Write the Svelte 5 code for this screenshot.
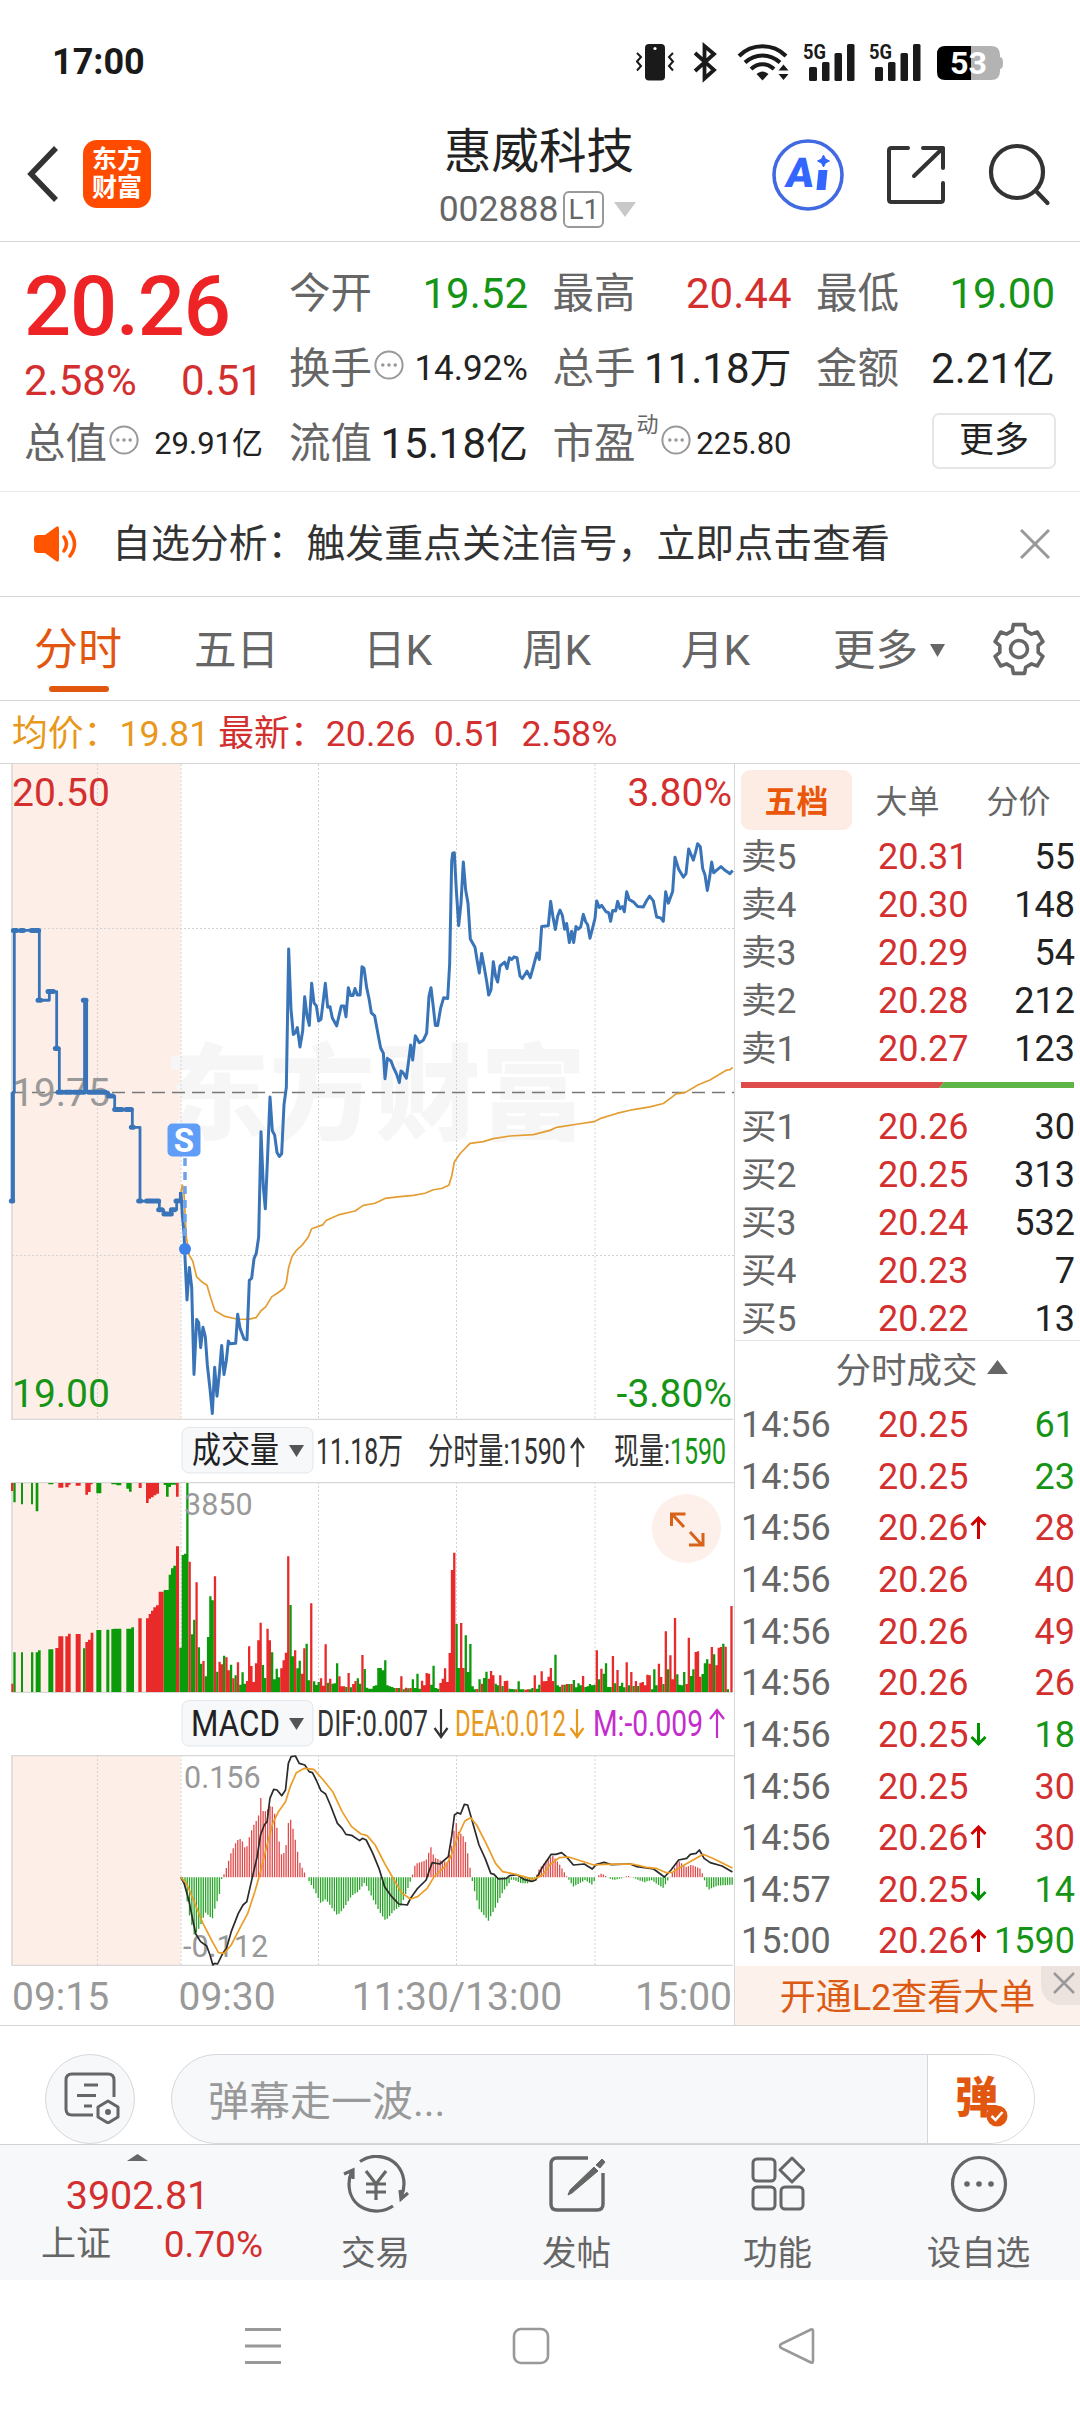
<script>
  const stats = [
    { label: '今开', value: '19.52', tone: 'down' },
    { label: '最高', value: '20.44', tone: 'up' },
    { label: '最低', value: '19.00', tone: 'down' },
    { label: '换手', value: '14.92%', info: true, size: 'mid' },
    { label: '总手', value: '11.18万' },
    { label: '金额', value: '2.21亿' },
    { label: '流值', value: '15.18亿' },
    { label: '市盈', sup: '动', value: '225.80', info: true, size: 'small' }
  ];

  const tabs = ['分时', '五日', '日K', '周K', '月K'];

  const sells = [
    ['卖5', '20.31', 55],
    ['卖4', '20.30', 148],
    ['卖3', '20.29', 54],
    ['卖2', '20.28', 212],
    ['卖1', '20.27', 123]
  ];
  const buys = [
    ['买1', '20.26', 30],
    ['买2', '20.25', 313],
    ['买3', '20.24', 532],
    ['买4', '20.23', 7],
    ['买5', '20.22', 13]
  ];

  const trades = [
    { time: '14:56', price: '20.25', vol: 61, side: 'down' },
    { time: '14:56', price: '20.25', vol: 23, side: 'down' },
    { time: '14:56', price: '20.26', vol: 28, side: 'up', move: 'up' },
    { time: '14:56', price: '20.26', vol: 40, side: 'up' },
    { time: '14:56', price: '20.26', vol: 49, side: 'up' },
    { time: '14:56', price: '20.26', vol: 26, side: 'up' },
    { time: '14:56', price: '20.25', vol: 18, side: 'down', move: 'down' },
    { time: '14:56', price: '20.25', vol: 30, side: 'up' },
    { time: '14:56', price: '20.26', vol: 30, side: 'up', move: 'up' },
    { time: '14:57', price: '20.25', vol: 14, side: 'down', move: 'down' },
    { time: '15:00', price: '20.26', vol: 1590, side: 'down', move: 'up' }
  ];

  const gridX = [97.5, 181, 318.5, 456.5, 595];

  // price lines: x in 1/3 px, y scaled by PRICE_Y
  const PRICE_Y = 0.43367;
  const preOpen =
    '34,1017 40,1017 40,766 43,766 43,393 118,393 118,554 148,554 148,534 170,534 170,665 178,665 178,766 254,766 254,554 260,554 260,766 325,766 330,775 344,775 344,806 397,806 397,847 420,847 420,1017 478,1017 478,1037 490,1037 495,1047 512,1047 518,1037 530,1037 530,1017 541,1017 541,996';
  const priceLine =
    '543,996 547,1050 552,1090 554,1130 561,1245 568,1170 575,1215 582,1417 590,1290 596,1297 602,1355 609,1308 616,1330 622,1395 630,1450 637,1507 644,1400 651,1467 658,1415 665,1350 672,1417 679,1385 685,1340 690,1346 707,1345 713,1278 720,1310 732,1335 741,1337 748,1200 755,1195 762,1150 769,1137 776,1100 783,857 790,985 796,1035 803,910 810,777 817,855 824,865 831,905 838,914 845,908 852,795 859,755 866,436 873,575 880,633 887,628 892,617 900,662 908,625 914,546 921,590 928,612 935,515 942,560 949,567 956,602 963,598 969,560 976,515 983,570 990,569 997,595 1010,613 1024,567 1032,567 1038,592 1045,525 1052,543 1059,543 1065,527 1072,542 1080,542 1086,477 1092,480 1100,525 1107,550 1114,583 1124,590 1134,632 1142,664 1150,676 1155,735 1162,688 1173,694 1180,708 1190,725 1198,744 1203,717 1210,722 1219,734 1225,700 1232,657 1238,692 1246,636 1258,652 1270,646 1280,630 1287,545 1293,525 1300,570 1306,612 1313,612 1322,572 1331,548 1343,550 1349,470 1355,235 1358,215 1363,214 1369,300 1376,382 1383,330 1390,235 1397,300 1404,330 1411,413 1425,432 1432,465 1438,491 1445,446 1452,475 1460,510 1466,542 1473,530 1480,465 1487,500 1493,512 1500,475 1514,466 1521,481 1528,456 1535,460 1542,454 1551,456 1560,498 1567,504 1581,487 1591,502 1598,482 1611,445 1618,460 1625,384 1645,382 1652,326 1659,362 1666,391 1673,360 1680,346 1687,358 1694,390 1700,377 1708,421 1715,395 1721,421 1728,384 1735,390 1742,385 1750,356 1757,373 1763,380 1770,411 1778,387 1785,365 1790,325 1798,340 1805,335 1818,350 1826,352 1832,372 1838,347 1847,348 1853,326 1860,343 1867,338 1873,350 1880,304 1888,322 1900,327 1913,338 1930,339 1940,324 1949,314 1960,325 1970,362 1982,364 1990,372 1997,304 2005,330 2018,303 2025,224 2036,252 2050,270 2058,262 2066,205 2073,218 2080,231 2087,212 2093,193 2101,200 2108,250 2115,265 2122,301 2129,270 2135,235 2141,260 2152,253 2163,246 2176,255 2190,262 2198,255';
  const avgLine =
    '543,996 547,980 552,1000 559,1100 568,1142 578,1155 590,1192 605,1203 621,1211 632,1240 645,1270 675,1283 710,1289 745,1290 768,1286 783,1270 797,1261 815,1238 835,1228 852,1218 859,1205 866,1170 876,1145 890,1130 905,1120 925,1100 935,1081 968,1072 978,1062 1015,1049 1065,1040 1090,1027 1125,1022 1155,1011 1200,1007 1240,1004 1275,999 1300,991 1325,988 1347,980 1355,960 1363,927 1380,908 1410,884 1450,880 1480,873 1530,867 1600,864 1650,854 1670,847 1730,840 1782,834 1800,827 1850,815 1900,806 1950,800 1990,792 2015,778 2028,770 2055,767 2095,749 2130,738 2180,715 2190,714 2198,709';

  // auction volume: [colour, x, width, height] in 1/3 px
  const auctionBars = [
    ['r', 34, 6, 25], ['g', 40, 7, 119], ['g', 63, 6, 119], ['g', 93, 7, 119], ['g', 107, 7, 119], ['g', 114, 8, 125],
    ['g', 145, 15, 128], ['r', 166, 9, 132], ['r', 175, 15, 167], ['r', 196, 8, 167], ['r', 204, 8, 175], ['r', 227, 15, 174],
    ['g', 249, 7, 131], ['r', 256, 8, 150], ['r', 264, 8, 157], ['r', 272, 8, 178], ['g', 289, 15, 186], ['g', 319, 9, 187],
    ['g', 334, 7, 189], ['g', 341, 23, 190], ['g', 379, 15, 190], ['g', 394, 8, 194], ['r', 415, 10, 221], ['r', 438, 8, 221],
    ['r', 446, 7, 234], ['r', 453, 7, 244], ['r', 460, 8, 254], ['r', 468, 8, 260], ['r', 476, 15, 301], ['g', 491, 15, 306],
    ['g', 506, 7, 352], ['g', 513, 7, 371], ['g', 520, 8, 379], ['r', 528, 9, 437]
  ];
  const unmatchedBars = [
    ['r', 33, 7, 24], ['g', 40, 7, 58], ['g', 63, 6, 64], ['g', 93, 6, 64], ['g', 107, 8, 85], ['g', 145, 15, 4],
    ['r', 175, 15, 14], ['r', 196, 10, 13], ['r', 206, 6, 5], ['r', 227, 15, 8], ['r', 256, 8, 35], ['r', 264, 8, 27],
    ['r', 272, 6, 4], ['g', 289, 15, 31], ['g', 334, 15, 4], ['g', 349, 15, 7], ['g', 379, 8, 17], ['g', 387, 8, 26],
    ['r', 416, 9, 15], ['r', 438, 8, 60], ['r', 446, 7, 47], ['r', 453, 8, 43], ['r', 461, 8, 37], ['r', 469, 8, 32],
    ['g', 491, 7, 6], ['g', 498, 8, 41], ['g', 506, 7, 12], ['g', 513, 15, 5], ['r', 528, 8, 41]
  ];

  // one bar per minute, split in runs that start at x
  const volumeRuns = [
    { x: 541, bars: 'g133 g411 g415 g627 r391 g173 g217 r329 g134 g85 r93 g47 g165 g287 g275 r347 g61 r91 r83 g109 r104 r65 g82 r41 g50 r89 g22 g59 g25 r33' },
    { x: 747, bars: 'r137 r78 r30 r86 r155 r208 g81 g42 r190 r155 g119 g38 g70 g44 r71 r95 r118 r407 g261 g107 r125 g71 g94 r55 r131 g145 g35 r266' },
    { x: 942, bars: 'g32 g21 g30 r41 r19 r143 g28 r40 g25 g26 g86 r47 r17 r17 g15 r57 g14 r24 r33 g41 g25 r111 g69 g13 g10' },
    { x: 1114, bars: 'g10 g18 g20 g72 g72 g65 g95 g20 g17 g15 g12 r12 g12 r47 g8 r13 g11 r12 g38 g12 g55 g10 r34 r20 r57 r55 g22 g79 g12 g10' },
    { x: 1321, bars: 'r27 r40 r71 r30 r117 r366 r418 g204 g72 r207 r72 g170 g60 g144 g17 g8 r9 g38 r25 g42 g61 r40 r63 r50 g25 g20 r50 g18 r33 r34' },
    { x: 1528, bars: 'g10 g9 g8 r8 g32 g8 g8 r7 r8 g8 g12 r50 g10 g22 r62 r32 r33 r46 r72 r33 g112 g20 g16 r22 g22 r24 g24 r24 g36 g14 g26 g20 r48 g15 g17 g24 g20 g22' },
    { x: 1790, bars: 'r125 g38 r70 g55 g86 g15 g15 r108 g26 r66 g18 g28 g14 r89 g20 r60 g18 r33 g18 r28 r30 r20 r52 r50 g8 g68 g20 r85 r45 g24' },
    { x: 1997, bars: 'r182 g68 r110 r38 r222 g53 g22 g20 g60 r24 r163 g48 g68 r120 r122 r46 g54 g86 g98 r85 r135 g113 r80 r133 r135 g145 r136 g8' },
    { x: 2194, bars: 'r258' }
  ];
  const volumeBars = volumeRuns.flatMap((run) =>
    run.bars.split(' ').map((bar, i) => [bar[0], run.x - 3 + i * 6.9, 6.9, Number(bar.slice(1))])
  );

  function barPath(bars, color, fromTop) {
    return bars
      .filter((b) => b[0] === color)
      .map(([, x, w, h]) => {
        const y = fromTop ? 1 : 210 - h / 3;
        return `M${(x / 3).toFixed(2)} ${y.toFixed(2)}h${(w / 3).toFixed(2)}v${(h / 3).toFixed(2)}h-${(w / 3).toFixed(2)}z`;
      })
      .join('');
  }

  // MACD, x in 1/2.119 px and y in 1/3 px
  const difLine =
    '383,532 390,550 400,600 410,670 415,702 425,725 438,738 445,765 451,795 455,790 461,792 472,760 480,745 490,695 505,640 515,615 523,605 535,530 545,470 552,405 560,375 566,365 572,295 580,268 587,270 597,287 605,270 611,190 617,170 626,168 634,190 646,195 655,215 662,218 670,240 680,272 690,282 700,315 715,370 725,385 733,403 745,406 762,422 768,415 776,420 790,460 803,505 815,560 830,590 845,612 863,615 870,595 885,565 903,540 910,510 916,488 932,492 950,470 957,410 963,345 970,338 976,342 984,313 991,315 1000,360 1015,435 1028,475 1040,520 1047,523 1056,537 1073,535 1080,527 1095,524 1110,538 1127,544 1135,540 1150,500 1168,463 1178,463 1190,458 1200,470 1215,495 1238,492 1255,507 1263,494 1280,487 1295,494 1335,492 1350,500 1385,507 1408,531 1422,510 1438,480 1455,475 1463,463 1475,460 1482,450 1492,475 1505,488 1530,498 1552,516';
  const deaLine =
    '383,532 395,550 410,600 430,670 450,725 463,758 475,760 490,735 510,680 525,640 540,575 553,510 565,440 578,370 590,335 605,305 615,260 628,218 645,205 665,208 685,240 705,275 725,335 745,380 765,402 778,407 795,435 815,490 835,540 852,580 870,597 885,590 905,565 920,530 945,497 955,470 970,410 985,363 997,353 1010,375 1030,430 1050,490 1065,515 1090,522 1110,530 1130,538 1150,525 1165,495 1185,473 1205,471 1225,480 1258,495 1280,493 1340,492 1370,502 1390,505 1412,518 1425,517 1450,495 1490,463 1510,475 1552,504';
  const macdShape = [
    [385, 0], [392, -25], [400, -105], [412, -175], [416, -165], [424, -148], [435, -105], [450, -125], [456, -90], [465, -50],
    [470, -3], [475, 10], [480, 30], [490, 75], [500, 105], [507, 118], [515, 105], [521, 80], [530, 130], [540, 165],
    [547, 175], [552, 243], [558, 195], [565, 200], [575, 220], [582, 190], [590, 120], [597, 65], [605, 80], [612, 175],
    [617, 172], [625, 118], [635, 45], [645, 15], [652, -5], [665, -35], [680, -78], [690, -65], [715, -115], [730, -90],
    [745, -55], [760, -42], [773, -15], [790, -65], [805, -105], [817, -130], [835, -100], [850, -85], [865, -30], [872, -3],
    [880, 40], [900, 50], [905, 55], [912, 95], [920, 60], [935, 50], [948, 45], [958, 100], [965, 172], [972, 135],
    [980, 128], [988, 100], [997, 20], [1002, -20], [1015, -95], [1035, -130], [1050, -90], [1065, -45], [1085, -5], [1105, -18],
    [1120, -18], [1135, -2], [1140, 20], [1160, 55], [1172, 65], [1185, 40], [1200, 5], [1215, -28], [1240, -8], [1255, -22],
    [1265, 3], [1275, 12], [1290, -2], [1300, -8], [1320, -2], [1330, 5], [1345, -3], [1365, -15], [1380, -8], [1405, -32],
    [1420, 2], [1437, 50], [1455, 30], [1465, 38], [1485, 25], [1500, -38], [1520, -25], [1553, -22]
  ];

  function macdHeight(x) {
    const i = macdShape.findIndex((p) => p[0] >= x);
    if (i <= 0) return 0;
    const [x0, h0] = macdShape[i - 1];
    const [x1, h1] = macdShape[i];
    return h0 + ((h1 - h0) * (x - x0)) / (x1 - x0);
  }

  const macdBars = Array.from({ length: 240 }, (_, i) => {
    const x = 387 + i * 4.872;
    return { x, h: macdHeight(x) };
  });
  const macdPath = (sign) =>
    macdBars
      .filter((b) => b.h * sign > 0)
      .map((b) => `M${b.x.toFixed(1)} 532v${(-b.h).toFixed(1)}`)
      .join('');

  const gear = Array.from({ length: 6 }, (_, i) => {
    const at = (deg, r) => {
      const a = ((i * 60 + deg - 90) * Math.PI) / 180;
      return `${(27 + r * Math.cos(a)).toFixed(1)} ${(27 + r * Math.sin(a)).toFixed(1)}`;
    };
    return `${at(-20, 19.5)}L${at(-13, 25)}L${at(13, 25)}L${at(20, 19.5)}`;
  }).join('L');
</script>

{#snippet more()}
  <svg class="info" width="30" height="30" viewBox="0 0 30 30">
    <circle cx="15" cy="15" r="13.6" fill="none" stroke="#999" stroke-width="2" />
    <circle cx="8.8" cy="15" r="1.8" fill="#999" />
    <circle cx="15" cy="15" r="1.8" fill="#999" />
    <circle cx="21.2" cy="15" r="1.8" fill="#999" />
  </svg>
{/snippet}

{#snippet signal()}
  <g>
    <rect x="5" y="24" width="8" height="14" rx="1.5" />
    <rect x="18" y="19" width="7.5" height="19" rx="1.5" />
    <rect x="30.5" y="10" width="7.5" height="28" rx="1.5" />
    <rect x="43" y="1" width="7.5" height="37" rx="1.5" />
    <text x="-1" y="16" font-size="21" font-weight="700" textLength="23" lengthAdjust="spacingAndGlyphs">5G</text>
  </g>
{/snippet}

{#snippet book(rows)}
  {#each rows as [label, price, vol]}
    <div class="level">
      <span class="level-label">{label}</span>
      <span class="level-price up">{price}</span>
      <span class="level-vol">{vol}</span>
    </div>
  {/each}
{/snippet}

<div class="page" lang="zh-CN">
  <div class="status">
    <span class="clock">17:00</span>
    <svg width="370" height="50" viewBox="0 -5 370 50" fill="#1a1a1a">
      <rect x="9" y="1" width="20" height="36.500" rx="4" />
      <circle cx="19" cy="5.500" r="1.600" fill="#fff" />
      <path d="M1 10l4 4-4 4.500 4 4.500-4 4.500M37 10l-4 4 4 4.500-4 4.500 4 4.500" fill="none" stroke="#1a1a1a" stroke-width="2" />
      <path d="M59 10l19 17-9.500 8.500V3l9.500 8-19 17" fill="none" stroke="#1a1a1a" stroke-width="3.800" />
      <g fill="none" stroke="#1a1a1a" stroke-width="4">
        <path d="M103 13c13-13 34-13 47 0" />
        <path d="M109 19.500c10-9.500 25-9.500 35 0" />
        <path d="M115 26c7-6.500 16-6.500 23 0" />
      </g>
      <path d="M120.500 31c4-3.500 8-3.500 12 0l-6 6.500z" />
      <path d="M142.500 27.500l5-6 5 6zM142.500 31l5 6 5-6z" />
      <g transform="translate(168)">{@render signal()}</g>
      <g transform="translate(234)">{@render signal()}</g>
      <path d="M309 3h26v34h-26q-8 0-8-8V11q0-8 8-8z" fill="#000" />
      <path d="M335 3h20q9 0 9 9v2q3 0 3 6t-3 6v2q0 9-9 9h-20z" fill="#b3b3b3" />
      <text x="314" y="31" fill="#fff" font-size="31" font-weight="700" textLength="37" lengthAdjust="spacingAndGlyphs">53</text>
    </svg>
  </div>

  <header class="head">
    <div class="head-left">
      <svg width="34" height="58" viewBox="0 0 34 58">
        <path d="M30 3L5 29l25 26" fill="none" stroke="#333" stroke-width="5.500" />
      </svg>
      <div class="logo"><span>东方</span><span>财富</span></div>
    </div>
    <div class="head-title">
      <h1>惠威科技</h1>
      <div class="code">
        <span>002888</span>
        <span class="l1">L1</span>
        <svg width="22" height="15" viewBox="0 0 22 15"><path d="M0 0h22L11 15z" fill="#c8c8c8" /></svg>
      </div>
    </div>
    <div class="head-right">
      <svg width="72" height="72" viewBox="0 0 72 72">
        <circle cx="36" cy="36" r="34" fill="none" stroke="#4169e1" stroke-width="3.600" />
        <text x="13" y="48.500" font-size="41" font-weight="900" fill="#3366ff" transform="translate(6) skewX(-8)" textLength="28" lengthAdjust="spacingAndGlyphs">A</text>
        <path d="M46.500 31H55.500l-2 20H44.500z" fill="#3366ff" />
        <path d="M51.500 16l2 4 4 2-4 2-2 4-2-4-4-2 4-2z" fill="#3366ff" stroke="#3366ff" />
      </svg>
      <svg width="60" height="60" viewBox="0 0 60 60" fill="none" stroke="#333" stroke-width="4" stroke-linecap="round" stroke-linejoin="round">
        <path d="M22 3H5.500Q3 3 3 5.500v49Q3 57 5.500 57h49q2.500 0 2.500-2.500V38M37 3h20v20M57 3L28 31" />
      </svg>
      <svg width="64" height="64" viewBox="0 0 64 64" fill="none" stroke="#333" stroke-width="4.200" stroke-linecap="round">
        <circle cx="29" cy="29" r="26" />
        <path d="M48 48l11.500 12" />
      </svg>
    </div>
  </header>

  <section class="quote">
    <div class="quote-main">
      <div class="price">20.26</div>
      <div class="change"><span>2.58%</span><span>0.51</span></div>
      <div class="stat">
        <span class="stat-label">总值</span>{@render more()}
        <span class="stat-value small">29.91亿</span>
      </div>
    </div>
    <div class="quote-grid">
      {#each stats as s}
        <div class="stat">
          <span class="stat-label">{s.label}</span>
          {#if s.sup}<span class="sup">{s.sup}</span>{/if}
          {#if s.info}{@render more()}{/if}
          <span class="stat-value {s.tone ?? ''} {s.size ?? ''}">{s.value}</span>
        </div>
      {/each}
      <div class="stat end"><button class="more-btn">更多</button></div>
    </div>
  </section>

  <section class="notice">
    <svg width="46" height="36" viewBox="0 0 46 36">
      <path d="M4 9h7L22 1q3-2 3 2v30q0 4-3 2L11 27H4q-4 0-4-4V13q0-4 4-4z" fill="#ff5500" />
      <path d="M30 11q5 7 0 14M36 6q9 12 0 24" fill="none" stroke="#ff5500" stroke-width="3.500" stroke-linecap="round" />
    </svg>
    <p>自选分析：触发重点关注信号，立即点击查看</p>
    <svg width="30" height="30" viewBox="0 0 30 30"><path d="M1 1l28 28M29 1L1 29" stroke="#999" stroke-width="3" /></svg>
  </section>

  <nav class="tabs">
    {#each tabs as tab, i}
      <span class="tab" class:active={i === 0}>{tab}</span>
    {/each}
    <span class="tab">更多<svg width="15" height="13" viewBox="0 0 15 13"><path d="M0 0h15L7.500 13z" fill="#666" /></svg></span>
    <svg class="gear" width="54" height="54" viewBox="0 0 54 54" fill="none" stroke="#666" stroke-width="3.600" stroke-linejoin="round">
      <path d="M{gear}z" />
      <circle cx="27" cy="27" r="8.500" />
    </svg>
  </nav>

  <div class="legend">
    <span class="avg">均价：19.81</span>
    <span>最新：20.26</span>
    <span>0.51</span>
    <span>2.58%</span>
  </div>

  <main class="board">
    <div class="charts">
      <svg width="734" height="656" viewBox="0 0 734 656">
        <rect x="12" y="0" width="168.500" height="655" fill="#fdeee7" />
        <text class="watermark" x="164" y="368" textLength="422" lengthAdjust="spacingAndGlyphs">东方财富</text>
        <g class="grid">
          {#each gridX as x}<path d="M{x} 0V655" />{/each}
          <path d="M12 164.500H734M12 491.500H734" />
        </g>
        <path class="frame" d="M12 0V655.500H733" />
        <path d="M12 328.500H734" stroke="#777" stroke-width="1.600" stroke-dasharray="13 7" />
        <text x="12" y="342" fill="#999">19.75</text>
        <g class="lines" transform="translate(0 -4) scale(0.33333 {PRICE_Y})">
          <polyline points={avgLine} stroke="#e39d33" stroke-width="1.700" />
          <polyline points={preOpen} stroke="#3a74b8" stroke-width="2.800" />
          <polyline points="38,1017 38,766" stroke="#3a74b8" stroke-width="4" />
          <polyline points="257,766 257,554" stroke="#3a74b8" stroke-width="4" />
          <polyline points={priceLine} stroke="#3a74b8" stroke-width="3" />
          <path
            d="M34 1017h4M40 393h10M62 393h8M94 393h22M114 554h8M144 534h16M166 665h8M174 766h14M196 766h18M222 766h30M250 554h8M266 766h50M326 775h12M344 806h22M378 806h16M394 847h6M416 1017h6M440 1017h36M476 1037h10M492 1047h22M514 1037h10M528 1017h8"
            stroke="#3a74b8"
            stroke-width="5"
            stroke-linecap="round"
          />
        </g>
        <path d="M185 394V478" stroke="#6ea3ea" stroke-width="3.500" stroke-dasharray="8 6" />
        <circle cx="185" cy="485" r="6" fill="#3c82ea" />
        <rect x="167.500" y="359.500" width="33" height="33" rx="5" fill="#5f9df7" />
        <text x="184" y="388" text-anchor="middle" font-size="33" font-weight="700" fill="#fff">S</text>
        <text x="12" y="42" fill="#d32f2f">20.50</text>
        <text x="732" y="42" text-anchor="end" fill="#d32f2f">3.80%</text>
        <text x="12" y="643" fill="#159415">19.00</text>
        <text x="732" y="643" text-anchor="end" fill="#159415">-3.80%</text>
      </svg>

      <svg class="indicator" width="734" height="62" viewBox="0 0 734 62">
        <rect x="182" y="7.500" width="131" height="45.500" rx="7" fill="#f6f8fa" stroke="#e3e6ea" />
        <text x="192" y="43" fill="#222" textLength="87" lengthAdjust="spacingAndGlyphs">成交量</text>
        <path d="M289 25h15l-7.500 12z" fill="#555" />
        <text x="316" y="44" textLength="87" lengthAdjust="spacingAndGlyphs">11.18万</text>
        <text x="428" y="44" textLength="138" lengthAdjust="spacingAndGlyphs">分时量:1590</text>
        <path class="arrow" d="M577.500 47V19M571 28l6.500-9 6.500 9" />
        <text x="614" y="44" lengthAdjust="spacingAndGlyphs" textLength="112">现量:<tspan fill="#159415">1590</tspan></text>
      </svg>

      <svg width="734" height="211" viewBox="0 0 734 211">
        <rect x="12" y="0" width="168.500" height="210" fill="#fdeee7" />
        <g class="grid">
          {#each gridX as x}<path d="M{x} 0V210" />{/each}
        </g>
        <path class="frame" d="M734 .5H12V210.500H733" />
        {#each [['g', '#0a9a0a'], ['r', '#e82a2a']] as [key, color]}
          <path d={barPath(auctionBars, key)} fill={color} />
          <path d={barPath(unmatchedBars, key, true)} fill={color} />
          <path d={barPath(volumeBars, key)} fill={color} />
        {/each}
        <text class="scale" x="184" y="33">3850</text>
        <circle cx="686.500" cy="46.500" r="34.500" fill="#fdf0ea" />
        <path d="M671.500 44V32h14M672 32l12 13M703 51v12h-14M702 63l-12-13" fill="none" stroke="#d9621b" stroke-width="3" />
      </svg>

      <svg class="indicator" width="734" height="62" viewBox="0 0 734 62">
        <rect x="182" y="7.500" width="131" height="45.500" rx="7" fill="#f6f8fa" stroke="#e3e6ea" />
        <text x="191" y="43" fill="#222" textLength="89" lengthAdjust="spacingAndGlyphs">MACD</text>
        <path d="M289 25h15l-7.500 12z" fill="#555" />
        <text x="317" y="43" textLength="111" lengthAdjust="spacingAndGlyphs">DIF:0.007</text>
        <path class="arrow" d="M441 16V44M434.500 35l6.500 9 6.500-9" />
        <text x="455" y="43" textLength="111" lengthAdjust="spacingAndGlyphs" fill="#e8981c">DEA:0.012</text>
        <path class="arrow dea" d="M577 16V44M570.500 35l6.500 9 6.500-9" />
        <text x="593" y="43" textLength="110" lengthAdjust="spacingAndGlyphs" fill="#c42dcb">M:-0.009</text>
        <path class="arrow macd" d="M717 45V17M710 26l7-9 7 9" />
      </svg>

      <svg width="734" height="211" viewBox="0 0 734 211">
        <rect x="12" y="0" width="168.500" height="210" fill="#fdeee7" />
        <g class="grid">
          {#each gridX as x}<path d="M{x} 0V210" />{/each}
        </g>
        <path class="frame" d="M734 .5H12V210.500H733" />
        <text class="scale" x="184" y="33">0.156</text>
        <text class="scale" x="183" y="202">-0.112</text>
        <g class="lines" transform="translate(0 -55) scale(0.47192 0.33333)">
          <path d={macdPath(1)} stroke="#e04a4a" stroke-width="1.300" />
          <path d={macdPath(-1)} stroke="#28a428" stroke-width="1.300" />
          <polyline points={difLine} stroke="#2b2b2b" stroke-width="1.700" />
          <polyline points={deaLine} stroke="#eb9d26" stroke-width="1.700" />
        </g>
      </svg>

      <svg width="734" height="59" viewBox="0 0 734 59" fill="#999">
        <text x="12" y="44">09:15</text>
        <text x="178.500" y="44">09:30</text>
        <text x="457" y="44" text-anchor="middle">11:30/13:00</text>
        <text x="732" y="44" text-anchor="end">15:00</text>
      </svg>
    </div>

    <aside class="side">
      <div class="side-tabs">
        <span class="side-tab on">五档</span>
        <span class="side-tab">大单</span>
        <span class="side-tab">分价</span>
      </div>
      {@render book(sells)}
      <svg class="ratio" width="333" height="6" viewBox="0 0 333 6">
        <path d="M0 0h203l-5 6H0z" fill="#dd4b4b" />
        <path d="M203 0h130v6H198z" fill="#5fb548" />
      </svg>
      {@render book(buys)}
      <div class="trades-title">
        分时成交
        <svg width="21" height="14" viewBox="0 0 21 14"><path d="M0 14h21L10.500 0z" fill="#666" /></svg>
      </div>
      {#each trades as t}
        <div class="trade">
          <span class="trade-time">{t.time}</span>
          <span class="trade-price up">{t.price}</span>
          <span class="trade-move">
            {#if t.move === 'up'}
              <svg width="17" height="24" viewBox="0 0 17 24"><path d="M8.500 23V2M1.500 9l7-7 7 7" fill="none" stroke="#d00000" stroke-width="3" /></svg>
            {:else if t.move === 'down'}
              <svg width="17" height="24" viewBox="0 0 17 24"><path d="M8.500 1v21M1.500 15l7 7 7-7" fill="none" stroke="#009300" stroke-width="3" /></svg>
            {/if}
          </span>
          <span class="trade-vol {t.side}">{t.vol}</span>
        </div>
      {/each}
      <div class="banner">
        开通L2查看大单
        <span class="banner-close">
          <svg width="22" height="22" viewBox="0 0 22 22"><path d="M1 1l20 20M21 1L1 21" stroke="#999" stroke-width="2.500" /></svg>
        </span>
      </div>
    </aside>
  </main>

  <section class="comment">
    <div class="round">
      <svg width="56" height="52" viewBox="0 0 56 52" fill="none" stroke="#666" stroke-width="3">
        <path d="M29 43H8q-6 0-6-6V8q0-6 6-6h36q6 0 6 6v17" />
        <path d="M20 13h14M13 23.500h19M20 34h8" />
        <path d="M44 29l10 6v10l-10 6-10-6V35z" stroke-linejoin="round" />
        <circle cx="44" cy="40" r="2" fill="#666" stroke-width="2" />
      </svg>
    </div>
    <div class="input">
      <span class="placeholder">弹幕走一波...</span>
      <span class="danmu">
        弹
        <svg class="check" width="22" height="22" viewBox="0 0 22 22">
          <circle cx="11" cy="11" r="10.500" fill="#e2570f" />
          <path d="M5.500 11l4 4 7-8" fill="none" stroke="#fff" stroke-width="2.500" />
        </svg>
      </span>
    </div>
  </section>

  <footer class="bottom">
    <div class="index">
      <svg width="21" height="7" viewBox="0 0 21 7"><path d="M0 7h21L10.500 0z" fill="#666" /></svg>
      <span class="index-value">3902.81</span>
      <div class="index-row"><span>上证</span><span class="up">0.70%</span></div>
    </div>
    <div class="item">
      <svg width="66" height="58" viewBox="0 0 66 58" fill="none" stroke="#666" stroke-width="3.200">
        <path d="M17 6.500C35-6 61 5 61 29c0 5-1 9-3 13M65 38l-7 6-1-9M50 51C32 63 6 53 6 29c0-5 1-9 3-13M1 19l9-4v9" />
        <path d="M23 16l10 13 10-13M33 29v16M23 29h20M23 37h20" />
      </svg>
      <span>交易</span>
    </div>
    <div class="item">
      <svg width="58" height="58" viewBox="0 0 58 58" fill="none" stroke="#666" stroke-width="3.400">
        <path d="M40 3H9Q3 3 3 9v40q0 6 6 6h40q6 0 6-6V18" />
        <path d="M54 4l3 3-5 6-4-3zM46 12l4 4-26 22-4 2 2-5z" fill="#666" stroke-width="1" />
      </svg>
      <span>发帖</span>
    </div>
    <div class="item">
      <svg width="54" height="58" viewBox="0 0 54 58" fill="none" stroke="#666" stroke-width="3" stroke-linejoin="round">
        <rect x="2" y="4" width="22" height="22" rx="4" />
        <rect x="2" y="32" width="22" height="22" rx="4" />
        <rect x="30" y="32" width="22" height="22" rx="4" />
        <path d="M41 3l12 12-12 12-12-12z" />
      </svg>
      <span>功能</span>
    </div>
    <div class="item">
      <svg width="58" height="58" viewBox="0 0 58 58">
        <circle cx="29" cy="29" r="26.500" fill="none" stroke="#666" stroke-width="3.200" />
        <circle cx="17" cy="29" r="2.800" fill="#666" />
        <circle cx="29" cy="29" r="2.800" fill="#666" />
        <circle cx="41" cy="29" r="2.800" fill="#666" />
      </svg>
      <span>设自选</span>
    </div>
  </footer>

  <div class="system">
    <svg width="36" height="38" viewBox="0 0 36 38"><path d="M0 2.500h36M0 19h36M0 35.500h36" stroke="#999" stroke-width="3" /></svg>
    <svg class="home" width="38" height="38" viewBox="0 0 38 38"><rect x="2" y="2" width="34" height="34" rx="7" fill="none" stroke="#999" stroke-width="2.600" /></svg>
    <svg width="38" height="38" viewBox="0 0 38 38"><path d="M33 2.500q2-1 2 2v29q0 3-2 2L3 21q-2-2 0-4z" fill="none" stroke="#999" stroke-width="2.600" /></svg>
  </div>
</div>

<style>
  :global(body) {
    margin: 0;
    background: #fff;
  }

  .page {
    width: 1080px;
    height: 2412px;
    overflow: hidden;
    background: #fff;
    color: #222;
    font-family: Roboto, 'Noto Sans CJK SC', sans-serif;
    line-height: 1.2;
  }

  .page * {
    box-sizing: border-box;
  }

  svg {
    display: block;
    flex-shrink: 0;
  }

  .up {
    color: #d32f2f;
  }

  .down {
    color: #159415;
  }

  .status {
    height: 104px;
    padding: 22px 74px 0 52px;
    display: flex;
    justify-content: space-between;
    align-items: center;
  }

  .clock {
    font-size: 36px;
    font-weight: 700;
    color: #1a1a1a;
  }

  .head {
    height: 138px;
    padding: 0 28px 0 26px;
    display: grid;
    grid-template-columns: 1fr auto 1fr;
    border-bottom: 1px solid #d5d5d5;
  }

  .head-left {
    display: flex;
    align-items: center;
    gap: 23px;
    padding-bottom: 3px;
    height: 142px;
  }

  .logo {
    width: 68px;
    height: 68px;
    border-radius: 14px;
    background: #ff4b00;
    color: #fff;
    font-size: 25px;
    font-weight: 700;
    line-height: 28px;
    display: flex;
    flex-direction: column;
    align-items: center;
    justify-content: center;
  }

  .head-title {
    display: flex;
    flex-direction: column;
    align-items: center;
    padding-top: 18px;
  }

  h1 {
    margin: 0;
    font-size: 47.5px;
    font-weight: 400;
    line-height: 60px;
  }

  .code {
    display: flex;
    align-items: center;
    margin-left: -3px;
    font-size: 35.5px;
    line-height: 54px;
    color: #666;
  }

  .l1 {
    margin: 0 10px 0 5px;
    width: 41px;
    height: 37px;
    border: 2px solid #999;
    border-radius: 6px;
    font-size: 28px;
    line-height: 33px;
    text-align: center;
  }

  .head-right {
    display: flex;
    justify-content: flex-end;
    align-items: center;
    gap: 42px;
    height: 142px;
  }

  .quote {
    height: 250px;
    padding: 14px 25px 0 24px;
    display: flex;
    gap: 26px;
    border-bottom: 1px solid #eaeaea;
  }

  .quote-main {
    width: 239px;
  }

  .price {
    height: 98px;
    font-size: 83px;
    font-weight: 500;
    letter-spacing: -1.2px;
    line-height: 101px;
    color: #ed2326;
  }

  .change {
    height: 52px;
    display: flex;
    justify-content: space-between;
    font-size: 42px;
    line-height: 53px;
    color: #d32f2f;
  }

  .quote-grid {
    flex: 1;
    display: grid;
    grid-template-columns: repeat(3, 239px);
    justify-content: space-between;
    grid-auto-rows: 75px;
  }

  .stat {
    display: flex;
    align-items: center;
    height: 75px;
    padding-top: 1px;
    white-space: nowrap;
  }

  .stat-label {
    font-size: 41.5px;
    color: #666;
  }

  .info {
    margin: -8px 0 0 2px;
  }

  .sup {
    align-self: flex-start;
    margin: 5px 0 0 1px;
    font-size: 22px;
    color: #666;
  }

  .stat-value {
    margin-left: auto;
    font-size: 42px;
  }

  .stat-value.mid {
    font-size: 35px;
  }

  .stat-value.small {
    font-size: 31px;
  }

  .end {
    justify-content: flex-end;
  }

  .more-btn {
    width: 124px;
    height: 56px;
    margin: -6px -1px 0 0;
    padding: 0;
    border: 2px solid #e6e6e6;
    border-radius: 7px;
    background: #fff;
    color: #222;
    font: inherit;
    font-size: 35px;
  }

  .notice {
    height: 105px;
    padding: 0 30px 0 34px;
    display: flex;
    align-items: center;
    border-bottom: 1px solid #d5d5d5;
  }

  .notice p {
    flex: 1;
    margin: 0 0 0 32px;
    font-size: 38.9px;
    color: #333;
  }

  .tabs {
    height: 104px;
    padding-left: 34px;
    display: grid;
    grid-template-columns: 160px 169px 159px 159px 152px 159px 54px;
    border-bottom: 1px solid #d5d5d5;
  }

  .tab {
    display: flex;
    align-items: center;
    padding-top: 3px;
    font-size: 42.5px;
    color: #666;
  }

  .tab svg {
    margin-left: 12px;
  }

  .tab.active {
    position: relative;
    font-size: 44px;
    color: #e2570f;
  }

  .tab.active::after {
    content: '';
    position: absolute;
    left: 15px;
    bottom: 8px;
    width: 60px;
    height: 6px;
    border-radius: 3px;
    background: #e2570f;
  }

  .gear {
    align-self: center;
  }

  .legend {
    height: 63px;
    padding: 4px 0 0 12px;
    display: flex;
    align-items: center;
    gap: 18px;
    font-size: 35.8px;
    color: #d32f2f;
    border-bottom: 1px solid #d5d5d5;
  }

  .legend .avg {
    color: #e8981c;
    margin-right: -9px;
  }

  .board {
    height: 1262px;
    display: flex;
    border-bottom: 1px solid #d5d5d5;
  }

  .charts {
    width: 734px;
    font-size: 39px;
  }

  .charts .watermark {
    font-size: 104px;
    font-weight: 900;
    fill: #f6f6f6;
  }

  .grid path {
    fill: none;
    stroke: #d2d2d2;
    stroke-width: 1;
    stroke-dasharray: 2 2;
  }

  .lines > * {
    fill: none;
    stroke-linejoin: round;
    vector-effect: non-scaling-stroke;
  }

  .frame {
    fill: none;
    stroke: #d8d8d8;
    stroke-width: 1.5;
  }

  .scale {
    font-size: 30.5px;
    fill: #999;
  }

  .indicator text {
    font-size: 36px;
  }

  .indicator {
    fill: #333;
  }

  .arrow {
    fill: none;
    stroke: #333;
    stroke-width: 2.2;
  }

  .arrow.dea {
    stroke: #e8981c;
  }

  .arrow.macd {
    stroke: #c42dcb;
  }

  .side {
    flex: 1;
    padding-top: 6px;
    border-left: 1px solid #d8d8d8;
  }

  .side-tabs {
    display: grid;
    grid-template-columns: repeat(3, 111px);
    height: 62px;
    padding-left: 6px;
  }

  .side-tab {
    height: 60px;
    border-radius: 9px;
    line-height: 64px;
    text-align: center;
    font-size: 32px;
    color: #666;
  }

  .side-tab.on {
    background: #fdece4;
    color: #ea560a;
    font-weight: 700;
  }

  .level {
    display: grid;
    grid-template-columns: 137px 1fr auto;
    height: 48px;
    padding: 0 5px 0 6px;
    line-height: 50px;
    font-size: 36px;
  }

  .level-label {
    color: #666;
    font-size: 35.5px;
  }

  .ratio {
    margin: 10px 0 14px 6px;
  }

  .trades-title {
    height: 58px;
    margin-top: -2px;
    padding: 4px 0 0 28px;
    display: flex;
    justify-content: center;
    align-items: center;
    gap: 9px;
    border-top: 1px solid #e4e4e4;
    font-size: 35.5px;
    color: #666;
  }

  .trades-title svg {
    margin-top: -10px;
  }

  .trade {
    display: grid;
    grid-template-columns: 137px 92px 20px 1fr;
    height: 51.64px;
    padding: 4px 5px 0 6px;
    align-items: center;
    font-size: 36px;
  }

  .trade-move {
    padding-bottom: 3px;
  }

  .trade-time {
    color: #666;
  }

  .trade-vol {
    text-align: right;
  }

  .banner {
    position: relative;
    height: 59px;
    line-height: 65px;
    text-align: center;
    font-size: 36px;
    color: #db5b14;
    background: #fdf1eb;
  }

  .banner-close {
    position: absolute;
    top: 0;
    right: 0;
    width: 39px;
    height: 39px;
    display: flex;
    align-items: center;
    justify-content: center;
    padding: 0 0 4px 6px;
    border-bottom-left-radius: 20px;
    background: #ece2de;
  }

  .comment {
    height: 118px;
    padding: 28px 45px 0 45px;
    display: flex;
    gap: 36px;
  }

  .round {
    width: 90px;
    height: 90px;
    border: 1.5px solid #d5d7dc;
    border-radius: 50%;
    background: #f6f8fa;
    display: flex;
    align-items: center;
    justify-content: center;
    padding: 0 0 2px 3px;
  }

  .input {
    flex: 1;
    height: 90px;
    border: 1.5px solid #d5d7dc;
    border-radius: 45px;
    background: #f6f8fa;
    display: flex;
    align-items: stretch;
    overflow: hidden;
  }

  .placeholder {
    flex: 1;
    padding-left: 36px;
    line-height: 94px;
    font-size: 41px;
    color: #999;
  }

  .danmu {
    position: relative;
    width: 107px;
    padding-left: 27px;
    border-left: 1px solid #d5d7dc;
    background: #fff;
    line-height: 87px;
    font-size: 43px;
    font-weight: 900;
    color: #e2570f;
  }

  .check {
    position: absolute;
    left: 58px;
    top: 50px;
  }

  .bottom {
    height: 136px;
    display: grid;
    grid-template-columns: 275px repeat(4, 201px);
    background: #f6f8fa;
    border-top: 1px solid #d0d3d8;
  }

  .index {
    display: flex;
    flex-direction: column;
    align-items: center;
    padding-top: 9px;
  }

  .index-value {
    margin-top: 7px;
    font-size: 39.5px;
    line-height: 56px;
    color: #d32f2f;
  }

  .index-row {
    width: 222px;
    margin-left: 29px;
    display: flex;
    justify-content: space-between;
    font-size: 37px;
    line-height: 42px;
    color: #666;
  }

  .index-row span:first-child {
    font-size: 35px;
  }

  .item {
    display: flex;
    flex-direction: column;
    align-items: center;
    padding-top: 10px;
    font-size: 34.5px;
    line-height: 40px;
    color: #666;
  }

  .item span {
    margin-top: 20px;
  }

  .system {
    height: 132px;
    padding: 0 264px 0 245px;
    display: flex;
    justify-content: space-between;
    align-items: center;
  }

  .home {
    margin-left: 2px;
  }
</style>
